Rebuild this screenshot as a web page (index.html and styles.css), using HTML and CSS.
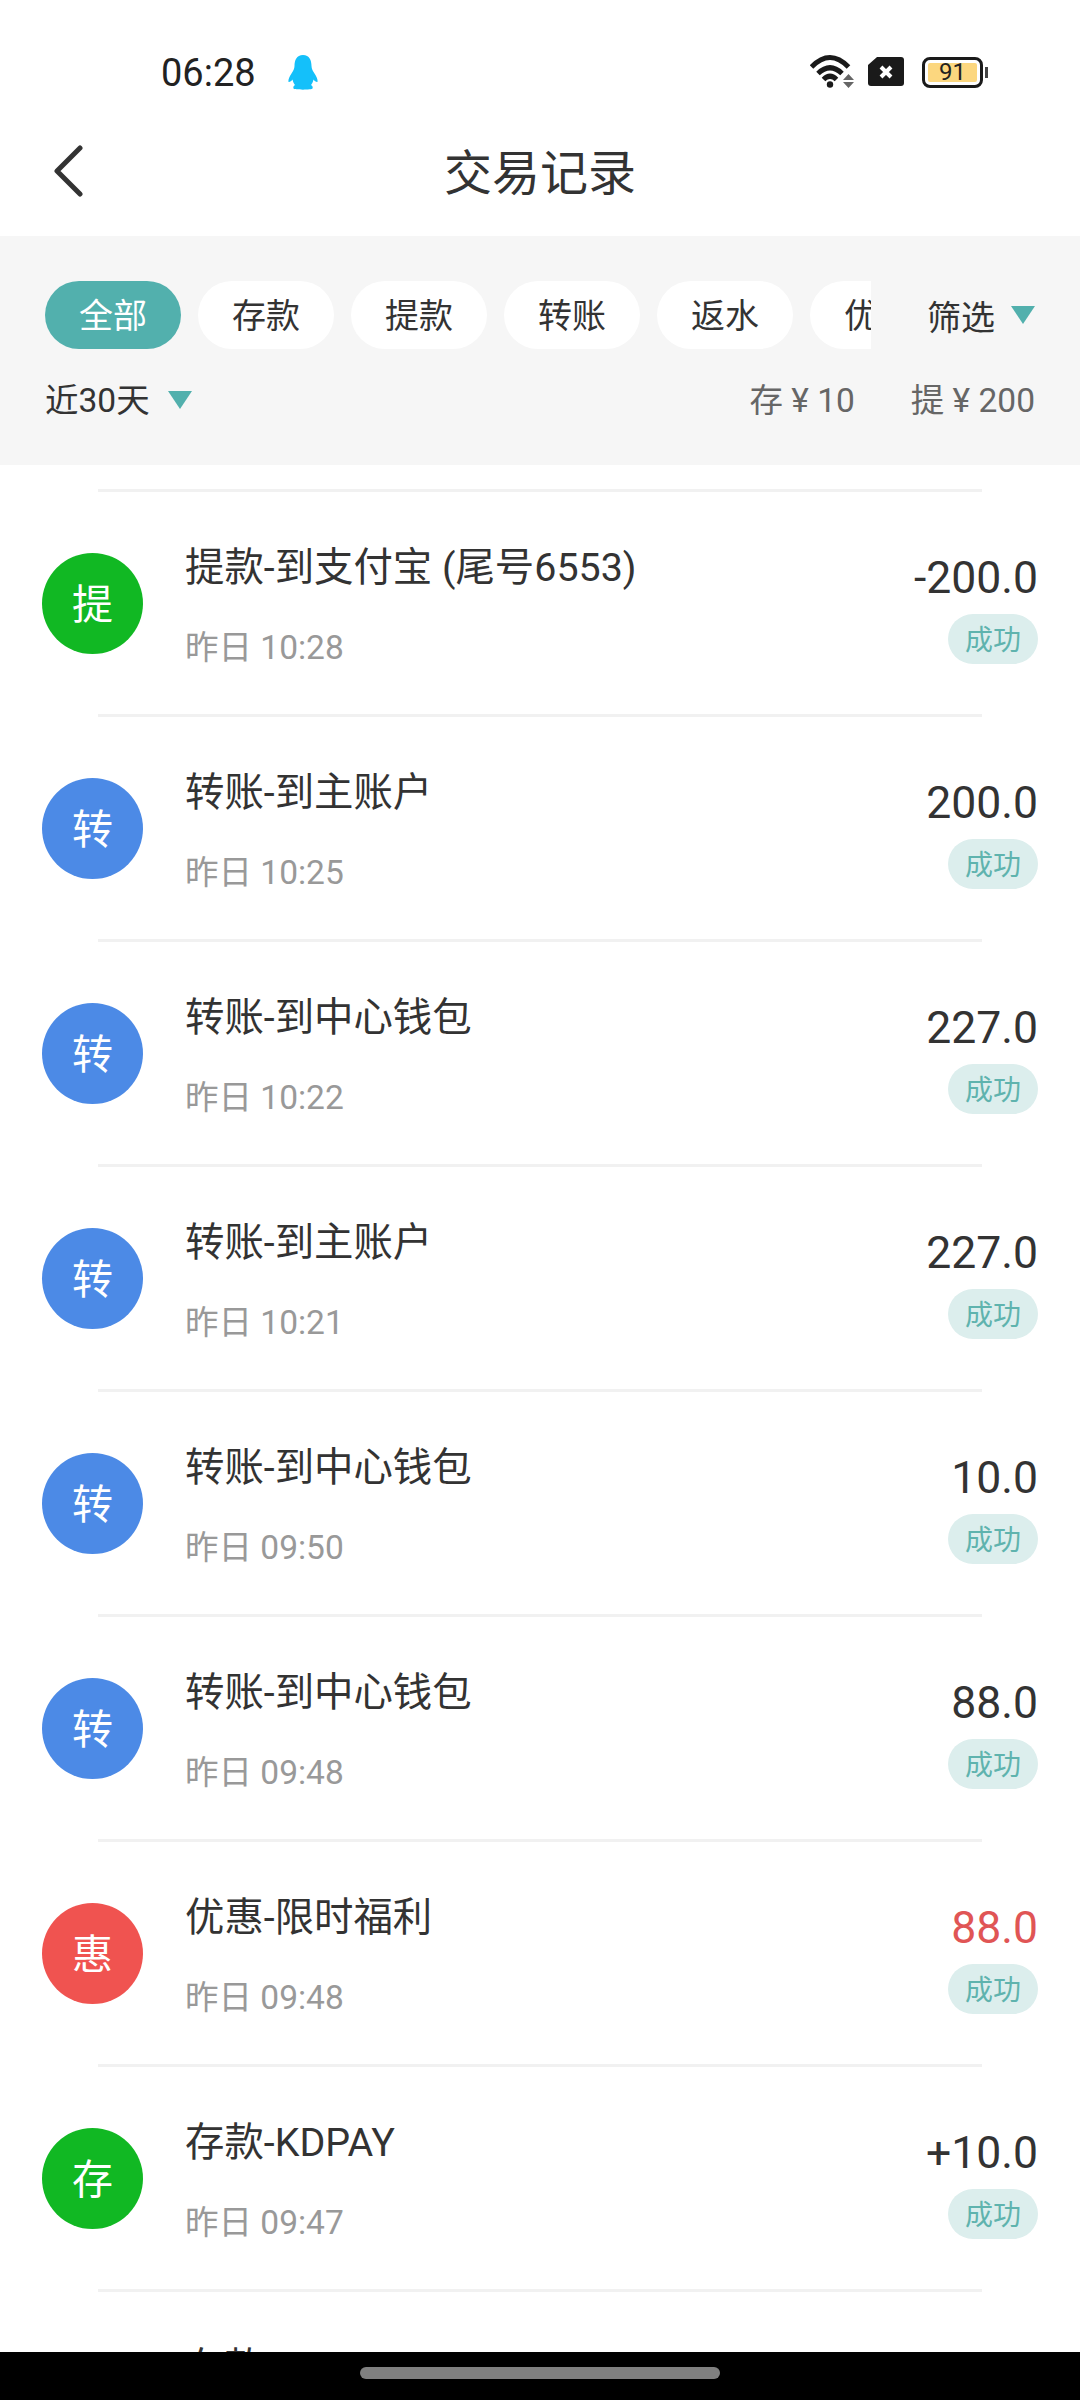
FILE: index.html
```html
<!DOCTYPE html>
<html lang="zh-CN">
<head>
    <meta charset="UTF-8">
    <title>交易记录</title>
    <link rel="stylesheet" href="styles.css">
</head>
<body>
    <div class="page">
        <!-- Status bar -->
        <div class="status-bar">
            <span class="clock">06:28</span>
            <svg class="penguin" viewBox="0 0 30 35" width="30" height="35">
                <path fill="#14c0fa" d="M15 0C8.5 0 6.5 5.500 6.500 11C6.500 14 5 16 3.500 18.500C1.500 21.500 0 24.500 .5 27C1.500 27.500 3.500 26 4.500 24.500C5 27 6 29 7 30C5.500 31 5 32 5.500 33.500C6 35 24 35 24.500 33.500C25 32 24.500 31 23 30C24 29 25 27 25.500 24.500C26.500 26 28.500 27.500 29.500 27C30 24.500 28.500 21.500 26.500 18.500C25 16 23.500 14 23.500 11C23.500 5.500 21.500 0 15 0Z"/>
            </svg>
            <div class="status-icons">
                <svg viewBox="0 0 45 33" width="45" height="33">
                    <g fill="none" stroke="#1a1a1a" stroke-width="5">
                        <path d="M1.500 12Q20 -7 38.500 12"/>
                        <path d="M8 18.500Q20 7 32 18.500"/>
                        <path d="M13.500 24.500Q20 18 26.500 24.500"/>
                    </g>
                    <circle cx="20" cy="29.500" r="3.200" fill="#1a1a1a"/>
                    <path fill="#666" d="M38.500 19L44 25H33Z M33 27H44L38.500 33Z"/>
                </svg>
                <svg class="sim" viewBox="0 0 36 29" width="36" height="29">
                    <path fill="#1a1a1a" d="M9 0H33Q36 0 36 3V26Q36 29 33 29H3Q0 29 0 26V8Z"/>
                    <path stroke="#fff" stroke-width="4" d="M13 10L23 20M23 10L13 20"/>
                </svg>
                <div class="battery">
                    <div class="battery-body"><span class="battery-level">91</span></div>
                    <div class="battery-nub"></div>
                </div>
            </div>
        </div>

        <!-- Title bar -->
        <div class="title-bar">
            <svg class="back" viewBox="0 0 30 52" width="30" height="52">
                <path fill="none" stroke="#333" stroke-width="5" stroke-linecap="round" stroke-linejoin="round" d="M27 3L4 26L27 49"/>
            </svg>
            <h1 class="page-title">交易记录</h1>
        </div>

        <!-- Filters -->
        <div class="filters">
            <div class="filter-top">
                <div class="chips">
                    <span class="chip active">全部</span>
                    <span class="chip">存款</span>
                    <span class="chip">提款</span>
                    <span class="chip">转账</span>
                    <span class="chip">返水</span>
                    <span class="chip">优惠</span>
                </div>
                <div class="filter-btn">筛选<span class="arrow"></span></div>
            </div>
            <div class="filter-bottom">
                <div class="range">近30天<span class="arrow"></span></div>
                <div class="totals">
                    <span>存 ¥ 10</span>
                    <span>提 ¥ 200</span>
                </div>
            </div>
        </div>

        <!-- Records -->
        <div class="list">
            <hr class="divider">
            <div class="row">
                <div class="badge green">提</div>
                <div class="info">
                    <div class="name">提款-到支付宝 (尾号6553)</div>
                    <div class="time">昨日 10:28</div>
                </div>
                <div class="result">
                    <div class="amount">-200.0</div>
                    <div class="state">成功</div>
                </div>
            </div>
            <hr class="divider">
            <div class="row">
                <div class="badge blue">转</div>
                <div class="info">
                    <div class="name">转账-到主账户</div>
                    <div class="time">昨日 10:25</div>
                </div>
                <div class="result">
                    <div class="amount">200.0</div>
                    <div class="state">成功</div>
                </div>
            </div>
            <hr class="divider">
            <div class="row">
                <div class="badge blue">转</div>
                <div class="info">
                    <div class="name">转账-到中心钱包</div>
                    <div class="time">昨日 10:22</div>
                </div>
                <div class="result">
                    <div class="amount">227.0</div>
                    <div class="state">成功</div>
                </div>
            </div>
            <hr class="divider">
            <div class="row">
                <div class="badge blue">转</div>
                <div class="info">
                    <div class="name">转账-到主账户</div>
                    <div class="time">昨日 10:21</div>
                </div>
                <div class="result">
                    <div class="amount">227.0</div>
                    <div class="state">成功</div>
                </div>
            </div>
            <hr class="divider">
            <div class="row">
                <div class="badge blue">转</div>
                <div class="info">
                    <div class="name">转账-到中心钱包</div>
                    <div class="time">昨日 09:50</div>
                </div>
                <div class="result">
                    <div class="amount">10.0</div>
                    <div class="state">成功</div>
                </div>
            </div>
            <hr class="divider">
            <div class="row">
                <div class="badge blue">转</div>
                <div class="info">
                    <div class="name">转账-到中心钱包</div>
                    <div class="time">昨日 09:48</div>
                </div>
                <div class="result">
                    <div class="amount">88.0</div>
                    <div class="state">成功</div>
                </div>
            </div>
            <hr class="divider">
            <div class="row">
                <div class="badge red">惠</div>
                <div class="info">
                    <div class="name">优惠-限时福利</div>
                    <div class="time">昨日 09:48</div>
                </div>
                <div class="result">
                    <div class="amount plus-red">88.0</div>
                    <div class="state">成功</div>
                </div>
            </div>
            <hr class="divider">
            <div class="row">
                <div class="badge green">存</div>
                <div class="info">
                    <div class="name">存款-KDPAY</div>
                    <div class="time">昨日 09:47</div>
                </div>
                <div class="result">
                    <div class="amount">+10.0</div>
                    <div class="state">成功</div>
                </div>
            </div>
            <hr class="divider">
            <div class="row">
                <div class="badge green">存</div>
                <div class="info">
                    <div class="name">存款-KDPAY</div>
                    <div class="time">昨日 09:40</div>
                </div>
            </div>
        </div>

        <!-- Gesture bar -->
        <div class="gesture-bar"><div class="handle"></div></div>
    </div>
</body>
</html>
```

FILE: styles.css
```css
/* Basic page styling */
body {
    margin: 0;
    background-color: #fff;
    font-family: Roboto, "Noto Sans CJK SC", sans-serif;
    color: #333;
}

.page {
    width: 1080px;
    height: 2400px;
    display: flex;
    flex-direction: column;
    overflow: hidden;
}

/* Status bar */
.status-bar {
    height: 110px;
    flex: none;
    box-sizing: border-box;
    padding: 55px 92px 0 161px;
    display: flex;
    align-items: flex-start;
}

.clock {
    font-size: 38px;
    line-height: 36px;
    color: #222;
}

.penguin {
    margin-left: 32px;
}

.status-icons {
    margin-left: auto;
    display: flex;
    align-items: flex-start;
    gap: 13px;
}

.sim {
    margin-top: 2px;
}

.battery {
    display: flex;
    align-items: center;
    margin-left: 5px;
    margin-top: 2px;
    height: 31px;
}

.battery-body {
    width: 61px;
    height: 31px;
    box-sizing: border-box;
    border: 3px solid #1a1a1a;
    border-radius: 8px;
    padding: 3px;
    display: flex;
}

.battery-level {
    flex: 1;
    background-color: #fcd77f;
    border-radius: 2px;
    font-size: 24px;
    line-height: 19px;
    text-align: center;
    color: #222;
}

.battery-nub {
    width: 3px;
    height: 11px;
    margin-left: 2px;
    background-color: #444;
}

/* Title bar */
.title-bar {
    height: 126px;
    flex: none;
    position: relative;
    display: flex;
    align-items: center;
    justify-content: center;
}

.back {
    position: absolute;
    left: 53px;
    top: 35px;
}

.page-title {
    margin: 0;
    font-size: 48px;
    font-weight: 400;
    line-height: 126px;
    padding-top: 2px;
    color: #333;
}

/* Filters */
.filters {
    height: 229px;
    flex: none;
    box-sizing: border-box;
    padding-top: 45px;
    background-color: #f6f6f6;
}

.filter-top {
    display: flex;
    align-items: center;
    height: 68px;
}

.chips {
    width: 826px;
    margin-left: 45px;
    display: flex;
    gap: 17px;
    overflow: hidden;
    flex: none;
}

.chip {
    flex: 0 0 136px;
    height: 68px;
    border-radius: 34px;
    background-color: #fff;
    font-size: 34px;
    line-height: 70px;
    text-align: center;
    color: #333;
}

.chip.active {
    background-color: #52b0ad;
    color: #fff;
}

.filter-btn {
    margin-left: 56px;
    display: flex;
    align-items: center;
    font-size: 34px;
    color: #333;
}

.arrow {
    width: 0;
    height: 0;
    margin-left: 16px;
    border-left: 12.500px solid transparent;
    border-right: 12.500px solid transparent;
    border-top: 18px solid #52b0ad;
}

.filter-bottom {
    display: flex;
    justify-content: space-between;
    align-items: center;
    margin-top: 27px;
    padding: 0 45px;
    height: 48px;
    font-size: 33.500px;
    line-height: 45px;
}

.range {
    display: flex;
    align-items: center;
    color: #333;
}

.range .arrow {
    margin-left: 18px;
}

.totals {
    display: flex;
    gap: 56px;
    color: #666;
}

/* Records */
.list {
    flex: 1;
    min-height: 0;
    overflow: hidden;
    padding-top: 24px;
}

.divider {
    height: 3px;
    margin: 0 98px;
    border: 0;
    background-color: #f1f1f1;
}

.row {
    height: 222px;
    box-sizing: border-box;
    padding: 0 42px;
    display: flex;
    align-items: center;
}

.badge {
    width: 101px;
    height: 101px;
    flex: none;
    border-radius: 50%;
    font-size: 41px;
    line-height: 104px;
    text-align: center;
    color: #fff;
}

.green { background-color: #11b823; }
.blue { background-color: #4c8ae6; }
.red { background-color: #f05350; }

.info {
    flex: 1;
    margin-left: 42px;
    padding-top: 7px;
}

.name {
    font-size: 39.400px;
    line-height: 50px;
    color: #333;
}

.time {
    margin-top: 33px;
    font-size: 33.500px;
    line-height: 44px;
    color: #999;
}

.result {
    display: flex;
    flex-direction: column;
    align-items: flex-end;
    padding-top: 9px;
}

.amount {
    font-size: 44.500px;
    line-height: 52px;
    color: #333;
}

.amount.plus-red {
    color: #e05555;
}

.state {
    width: 90px;
    height: 50px;
    margin-top: 10px;
    border-radius: 25px;
    background-color: #dceeed;
    font-size: 28px;
    line-height: 54px;
    text-align: center;
    color: #5fb3ae;
}

/* Gesture bar */
.gesture-bar {
    height: 48px;
    flex: none;
    background-color: #000;
    display: flex;
    justify-content: center;
    padding-top: 15px;
    box-sizing: border-box;
}

.handle {
    width: 360px;
    height: 12px;
    border-radius: 6px;
    background-color: #808080;
}
```
